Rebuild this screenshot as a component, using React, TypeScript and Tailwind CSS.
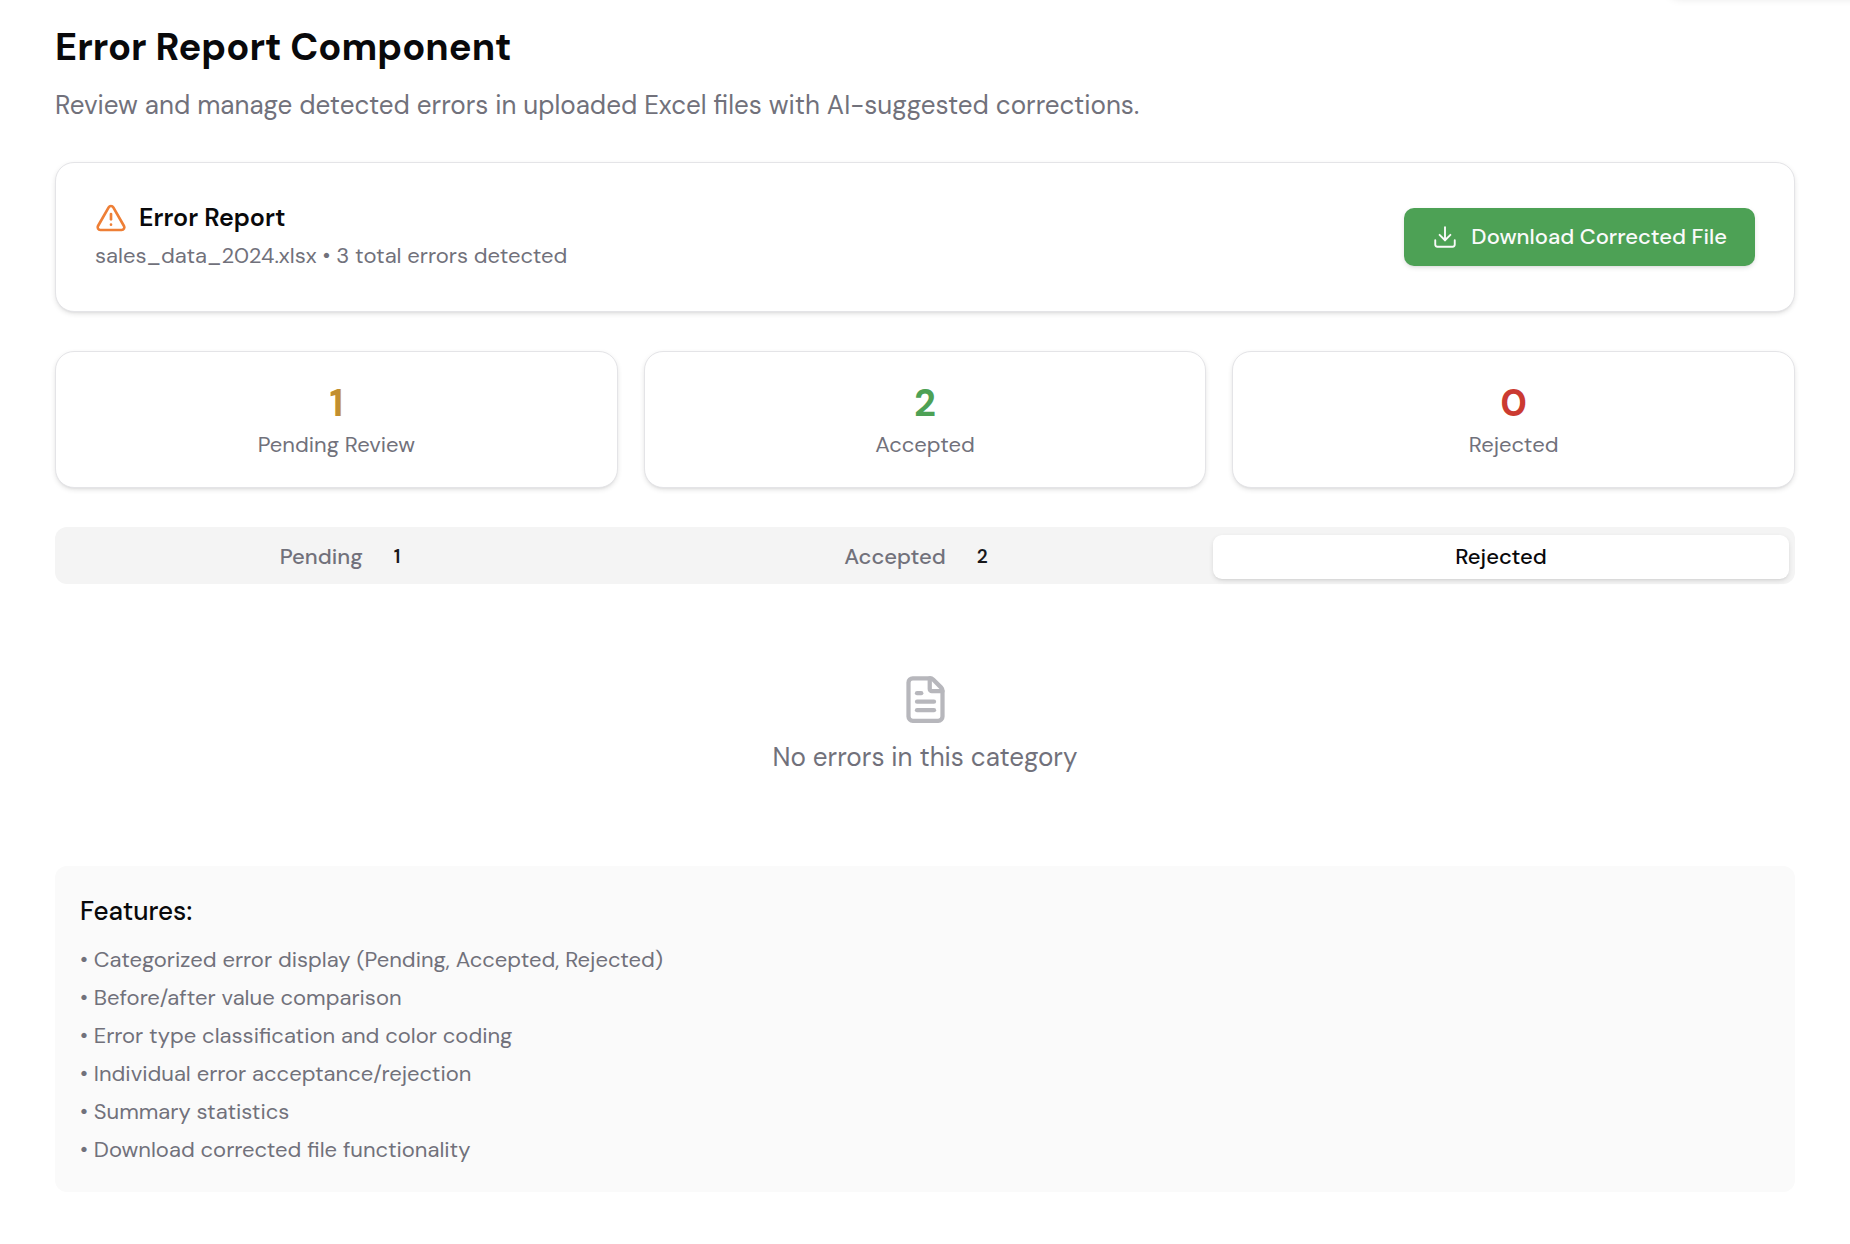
import React, { useState } from "react";
import { Download, FileText, TriangleAlert } from "lucide-react";

type Category = "Pending" | "Accepted" | "Rejected";

const stats = [
  { value: 1, label: "Pending Review", color: "text-[#c28f2f]" },
  { value: 2, label: "Accepted", color: "text-[#4da155]" },
  { value: 0, label: "Rejected", color: "text-[#cb3a31]" },
];

const tabs: { name: Category; count: number }[] = [
  { name: "Pending", count: 1 },
  { name: "Accepted", count: 2 },
  { name: "Rejected", count: 0 },
];

const features = [
  "Categorized error display (Pending, Accepted, Rejected)",
  "Before/after value comparison",
  "Error type classification and color coding",
  "Individual error acceptance/rejection",
  "Summary statistics",
  "Download corrected file functionality",
];

const softShadow = "shadow-[0_2px_5px_rgb(0_0_0/0.1),0_2px_3px_-2px_rgb(0_0_0/0.1)]";

function ReportHeader() {
  return (
    <section
      className={`mt-[38px] flex items-center justify-between rounded-[19px] border border-zinc-200 bg-white p-[39px] ${softShadow}`}
    >
      <div>
        <div className="flex items-center gap-3">
          <TriangleAlert className="size-8 text-[#ee7f36]" strokeWidth={2} aria-hidden="true" />
          <h2 className="text-[25px] leading-[26px] font-semibold">Error Report</h2>
        </div>
        <p className="mt-[6px] text-[22px] leading-8 text-zinc-500">
          sales_data_2024.xlsx • 3 total errors detected
        </p>
      </div>
      <button
        type="button"
        className={`flex h-[58px] items-center gap-[13px] rounded-[10px] bg-[#4da155] px-7 text-[22px] leading-8 font-medium text-zinc-50 ${softShadow}`}
      >
        <Download className="size-[26px]" strokeWidth={1.75} aria-hidden="true" />
        Download Corrected File
      </button>
    </section>
  );
}

function SummaryCards() {
  return (
    <section className="mt-[39px] grid grid-cols-3 gap-[26px]">
      {stats.map((s) => (
        <div
          key={s.label}
          className={`rounded-[19px] border border-zinc-200 bg-white p-[26px] text-center ${softShadow}`}
        >
          <div className={`text-[38px] leading-[51px] font-bold ${s.color}`}>{s.value}</div>
          <div className="text-[22px] leading-8 text-zinc-500">{s.label}</div>
        </div>
      ))}
    </section>
  );
}

export default function App() {
  const [active, setActive] = useState<Category>("Rejected");

  return (
    <div className="relative overflow-hidden bg-white font-['DM_Sans',Inter,sans-serif] text-zinc-950">
      <div className="absolute -top-11 -right-5 h-10 w-[200px] rounded-lg shadow-[0_2px_10px_rgb(0_0_0/0.12)]" />
      <main className="px-[55px] pt-6 pb-[52px]">
        <h1 className="text-[38px] leading-[46px] font-bold">Error Report Component</h1>
        <p className="mt-4 text-[26px] leading-[38px] text-zinc-500">
          Review and manage detected errors in uploaded Excel files with AI-suggested corrections.
        </p>

        <ReportHeader />
        <SummaryCards />

        <div
          role="tablist"
          className="mt-[39px] grid h-[57px] grid-cols-3 rounded-xl bg-[#f4f4f4] px-[6px] pt-2 pb-[5px]"
        >
          {tabs.map((t) => (
            <button
              key={t.name}
              type="button"
              role="tab"
              aria-selected={t.name === active}
              onClick={() => setActive(t.name)}
              className={`flex items-center justify-center rounded-[9px] text-[22px] leading-8 font-medium ${
                t.name === active ? `bg-white text-zinc-950 ${softShadow}` : "text-zinc-500"
              }`}
            >
              {t.name}
              {t.count > 0 && (
                <span className="ml-[13px] px-[18px] text-[19px] leading-[26px] font-semibold text-zinc-900">
                  {t.count}
                </span>
              )}
            </button>
          ))}
        </div>

        <div role="tabpanel" className="flex flex-col items-center py-[90px]">
          <FileText className="size-[51px] text-zinc-500 opacity-50" strokeWidth={2} aria-hidden="true" />
          <p className="mt-[13px] text-[26px] leading-[38px] text-zinc-500">
            No errors in this category
          </p>
        </div>

        <section className="rounded-xl bg-[#fafafa] px-[25px] py-[26px]">
          <h3 className="text-[26px] leading-[38px] font-medium">Features:</h3>
          <ul className="mt-[14px] flex flex-col gap-[6px] text-[22px] leading-8 text-zinc-500">
            {features.map((f) => (
              <li key={f}>• {f}</li>
            ))}
          </ul>
        </section>
      </main>
    </div>
  );
}
